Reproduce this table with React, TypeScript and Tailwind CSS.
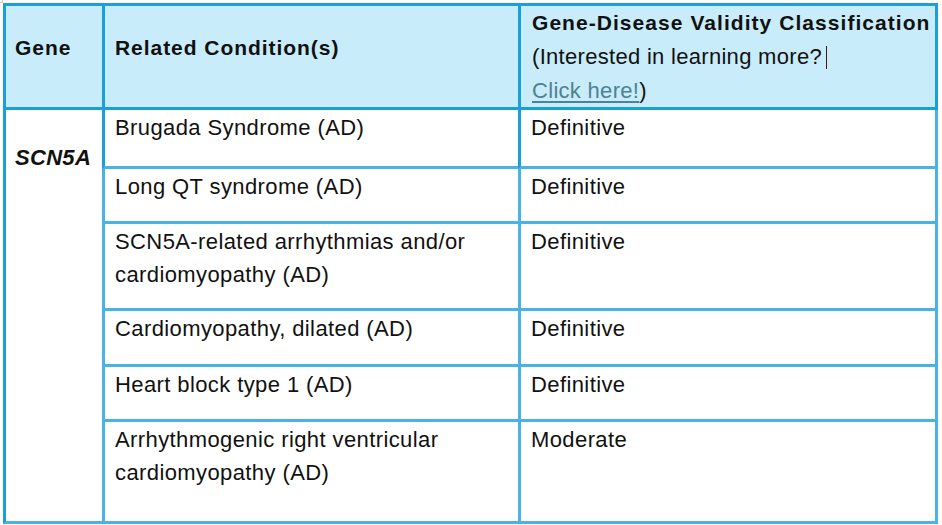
import React from 'react';

const rows = [
  { condition: ['Brugada Syndrome (AD)'], validity: 'Definitive', h: 'h-[59px]', lead: true },
  { condition: ['Long QT syndrome (AD)'], validity: 'Definitive', h: 'h-[55px]' },
  { condition: ['SCN5A-related arrhythmias and/or', 'cardiomyopathy (AD)'], validity: 'Definitive', h: 'h-[87px]' },
  { condition: ['Cardiomyopathy, dilated (AD)'], validity: 'Definitive', h: 'h-[56px]' },
  { condition: ['Heart block type 1 (AD)'], validity: 'Definitive', h: 'h-[55px]' },
  { condition: ['Arrhythmogenic right ventricular', 'cardiomyopathy (AD)'], validity: 'Moderate', h: 'h-[102px]' },
];

export default function App() {
  return (
    <div
      className="relative w-[942px] h-[525px] bg-white text-[#111] overflow-hidden"
      style={{ fontFamily: '"Liberation Sans", Arial, sans-serif' }}
    >
      <div className="absolute left-0 top-0 w-[3px] h-[3px] border-r border-b border-[#c8c8c8]" />
      <div className="pl-[3px] pt-[3px]">
        <div className="grid grid-cols-[99px_416px_420px]">
          {/* header */}
          <div className="h-[107px] border-l-[3px] border-t-[3px] border-b-[3px] border-[#1aa0d9] bg-[#c9ecfa] pl-[9px] pt-[25px] text-[21px] leading-[34px] font-bold tracking-[1px]">
            Gene
          </div>
          <div className="h-[107px] border-l-[3px] border-t-[3px] border-b-[3px] border-[#1aa0d9] bg-[#c9ecfa] pl-[10px] pt-[25px] text-[21px] leading-[34px] font-bold tracking-[0.95px]">
            Related Condition(s)
          </div>
          <div className="h-[107px] border-x-[3px] border-t-[3px] border-b-[3px] border-[#1aa0d9] bg-[#c9ecfa] pl-[11px] leading-[34px]">
            <div className="text-[21px] font-bold tracking-[1.05px]">Gene-Disease Validity Classification</div>
            <div className="text-[22px] tracking-[0.3px]">
              (Interested in learning more?
              <span className="inline-block w-px h-[23px] bg-[#4a140c] align-[-5px] ml-[4px]" />
            </div>
            <div className="text-[22px] tracking-[0.3px]">
              <span className="text-[#4b8294] underline decoration-[1.5px] underline-offset-[3px]">Click here!</span>)
            </div>
          </div>

          {/* gene cell spanning all body rows */}
          <div className="row-span-6 border-l-[3px] border-b-[3px] border-l-[#1aa0d9] border-b-[#4ab3e5] pl-[9px] pt-[31px] text-[22px] leading-[33px] font-bold italic tracking-[0.3px]">
            SCN5A
          </div>
          {rows.map((r, i) => (
            <React.Fragment key={i}>
              <div
                className={`${r.h} border-l-[3px] border-b-[3px] border-b-[#4ab3e5] ${
                  r.lead ? 'border-l-[#1aa0d9]' : 'border-l-[#4ab3e5]'
                } pl-[10px] pt-px text-[22px] leading-[33px] tracking-[0.4px]`}
              >
                {r.condition.map((c) => (
                  <div key={c}>{c}</div>
                ))}
              </div>
              <div
                className={`${r.h} border-x-[3px] border-b-[3px] border-b-[#4ab3e5] border-r-[#4ab3e5] ${
                  r.lead ? 'border-l-[#1aa0d9]' : 'border-l-[#4ab3e5]'
                } pl-[10px] pt-px text-[22px] leading-[33px] tracking-[0.4px]`}
              >
                {r.validity}
              </div>
            </React.Fragment>
          ))}
        </div>
      </div>
    </div>
  );
}
